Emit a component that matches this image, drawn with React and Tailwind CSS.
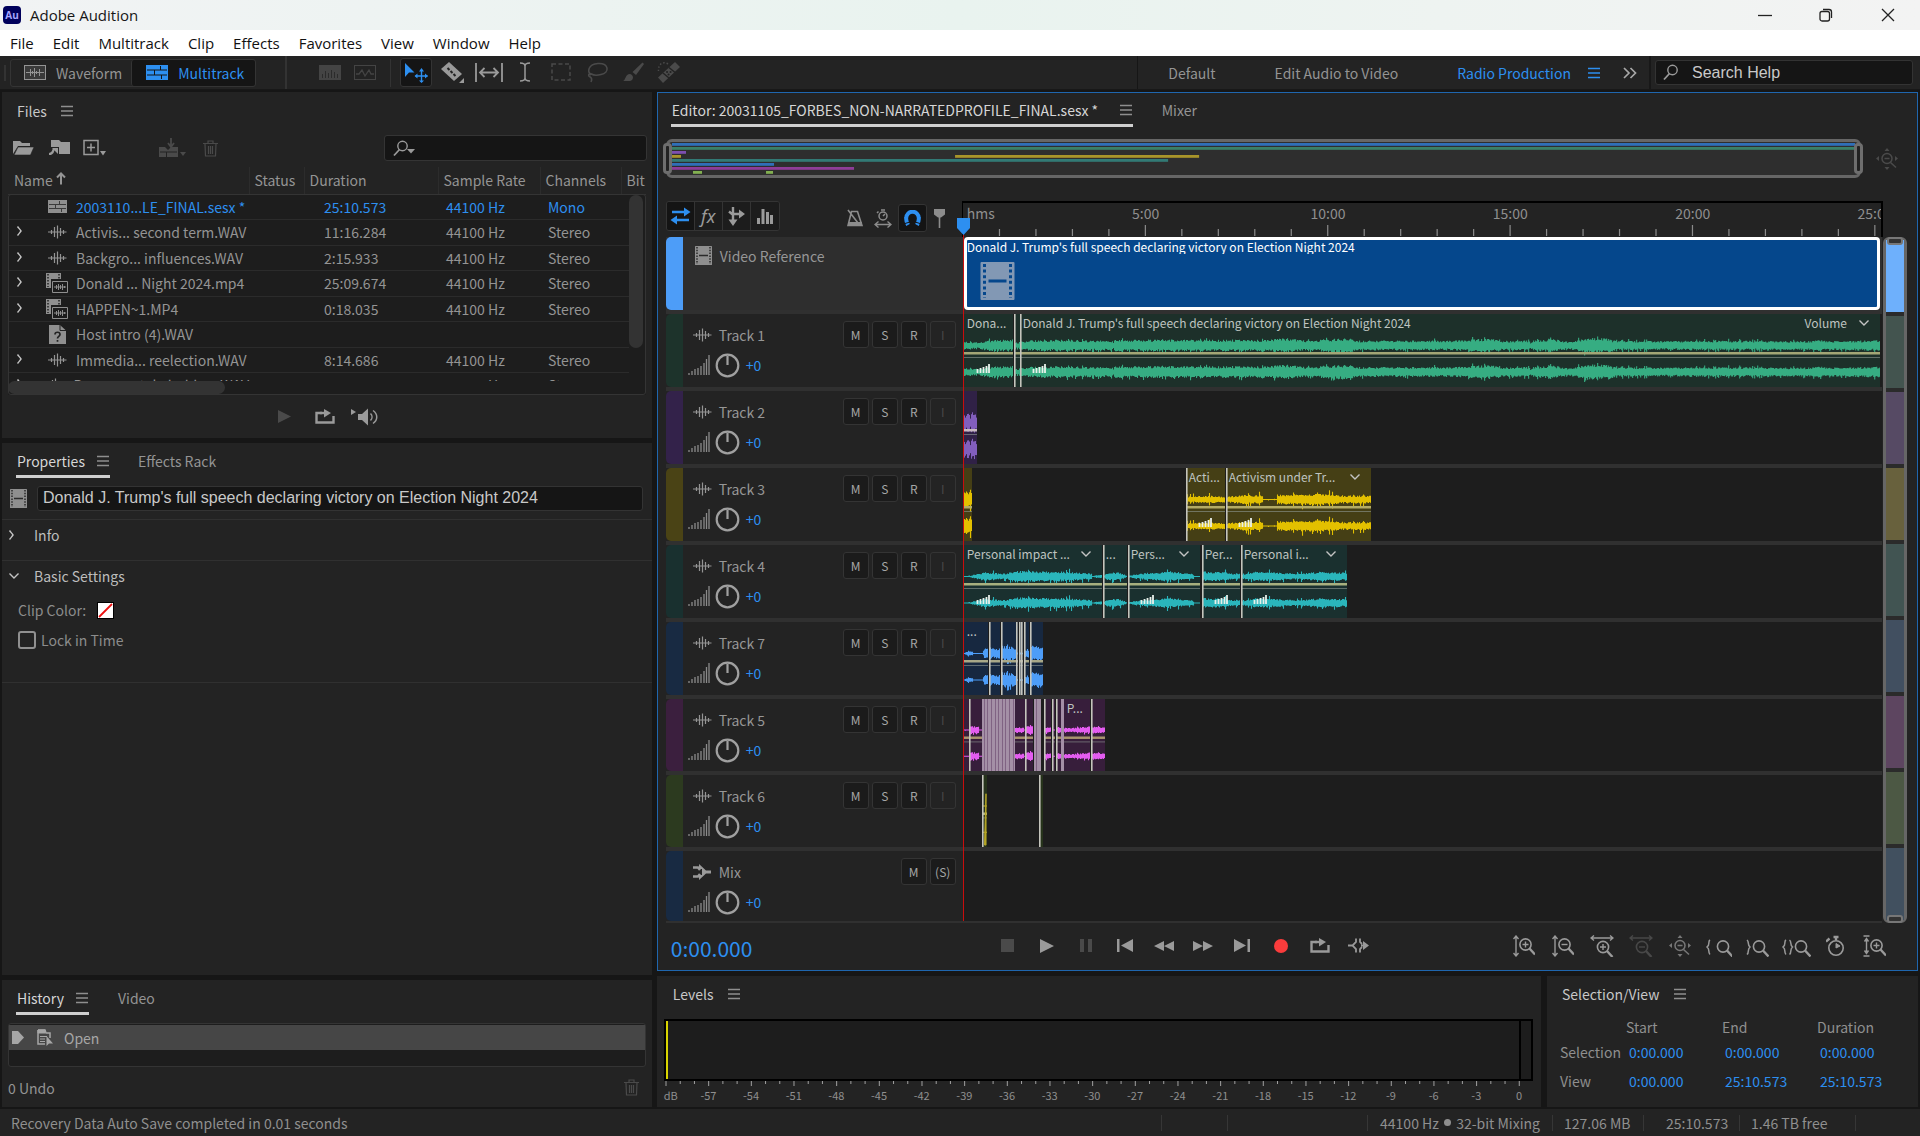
import React from "react";

const LANE = 918;
const TOTAL = 1510.573;
const pct = (v, of = LANE) => `${(v / of) * 100}%`;

function Svg({ w, h, children, className = "", label }) {
  return (
    <svg
      width={w}
      height={h}
      viewBox={`0 0 ${w} ${h}`}
      fill="none"
      stroke="currentColor"
      className={`shrink-0 ${className}`}
      aria-hidden={label ? undefined : true}
      aria-label={label}
    >
      {children}
    </svg>
  );
}

const Menu3 = ({ className = "text-[#8e8e8e]" }) => (
  <Svg w={12} h={12} className={className}>
    <path d="M0 1.5h12M0 6h12M0 10.5h12" strokeWidth="1.3" />
  </Svg>
);

const Chevron = ({ down, className = "text-[#c4c4c4]" }) =>
  down ? (
    <Svg w={12} h={8} className={className}>
      <path d="M1.5 1.5 6 6l4.5-4.5" strokeWidth="1.4" />
    </Svg>
  ) : (
    <Svg w={8} h={12} className={className}>
      <path d="M1.5 1.5C3 3.500 4 4.500 5 6 4 7.500 3 8.500 1.500 10.500" strokeWidth="1.400" />
    </Svg>
  );

const WaveIcon = ({ className = "text-[#949494]" }) => (
  <Svg w={19} h={14} className={className}>
    <path d="M0 7h18.500M3.500 5v4M6.500 2v10M9.500 0.500v13M12.500 3v8M15.500 5v4" strokeWidth="1.200" />
  </Svg>
);

const FilmIcon = ({ w = 17, h = 19, className = "text-[#8f8f8f]", hole = "#2b2b2b" }) => (
  <svg width={w} height={h} viewBox="0 0 34 38" className={`shrink-0 ${className}`} aria-hidden="true">
    <rect width="34" height="38" rx="1" fill="currentColor" />
    <path d="M4 2v34M30 2v34" stroke={hole} strokeWidth="3" strokeDasharray="3 2.600" />
    <path d="M8 19h18" stroke={hole} strokeWidth="3" />
  </svg>
);

const SessionIcon = ({ className = "text-[#8f8f8f]" }) => (
  <Svg w={19} h={13} className={className}>
    <path d="M0 0h19v13H0z" fill="currentColor" stroke="none" />
    <path d="M1 4.500h17M1 8.500h17M11.500 1v3M7.500 5v3.500M13.500 9v3" stroke="#3a3a3a" />
  </Svg>
);

const AvIcon = () => (
  <Svg w={22} h={20} className="text-[#8f8f8f]">
    <path d="M0 0h15v6H5v9H0z" fill="currentColor" stroke="none" />
    <path d="M2 1v13M13 1v5" stroke="#222" strokeWidth="1.500" strokeDasharray="1.500 1.500" />
    <path d="M6.500 8.500h15v11h-15zM8 14h12M10.500 12v4M12.500 11v6M14.500 12v4M16.500 11v6M18.500 13v2" />
  </Svg>
);

const MissingIcon = () => (
  <Svg w={17} h={19} className="text-[#8f8f8f]">
    <path d="M0 0h11l6 5.500V19H0z" fill="currentColor" stroke="none" />
    <path d="M11 0v5.500h6" stroke="#222" />
    <path d="M6 9.500c0-3 5-3 5 0 0 2-2.500 1.800-2.500 4M8.500 15v1.800" stroke="#222" strokeWidth="1.700" />
  </Svg>
);

const TrashIcon = () => (
  <Svg w={15} h={17} className="text-[#4a4a4a]">
    <path d="M0 3.500h15M5 3V1h5v2M2 4l.5 12h10L13 4M5.500 6v8M7.500 6v8M9.500 6v8" strokeWidth="1.200" />
  </Svg>
);

const LoopIcon = () => (
  <Svg w={20} h={15} className="text-[#9a9a9a]">
    <path d="M7 4H1.500v9.500h17V7" strokeWidth="2.400" />
    <path d="M5 4h6" strokeWidth="2.400" />
    <path d="M9 0l7 4-7 4.500z" fill="currentColor" stroke="none" />
  </Svg>
);

const SearchIcon = ({ w = 16, caret }) => (
  <Svg w={caret ? 22 : w} h={17} className="text-[#9a9a9a]">
    <circle cx="9.500" cy="6" r="4.700" strokeWidth="1.400" />
    <path d="M6.500 9.500 1 15.500" strokeWidth="1.800" />
    {caret && <path d="M14 9h8l-4 4.500z" fill="currentColor" stroke="none" />}
  </Svg>
);

function Tab({ children, active, menu, className = "" }) {
  return (
    <button
      type="button"
      role="tab"
      aria-selected={!!active}
      className={`flex h-[29px] items-center justify-between gap-[12px] border-b-[3px] px-px pb-[2px] whitespace-nowrap ${className} ${
        active ? "border-[#cfcfcf] text-[#d6d6d6]" : "border-transparent text-[#949494]"
      }`}
    >
      {children}
      {menu && <Menu3 />}
    </button>
  );
}

/* ---------- window chrome ---------- */

function TitleBar() {
  return (
    <header className="flex h-[30px] shrink-0 items-center bg-linear-to-r from-[#f1f3f4] via-[#e9f3ef] to-[#f3f3f3] pl-[3px] font-['Open_Sans',sans-serif] text-[15px] text-[#161616]">
      <span className="flex h-[18px] w-[18px] items-center justify-center rounded-[4px] bg-[#00005b] text-[10px] font-bold text-[#a5a5ff]">
        Au
      </span>
      <h1 className="ml-[9px]">Adobe Audition</h1>
      <div className="ml-auto flex items-center text-[#222]">
        <button type="button" aria-label="Minimize" className="flex h-[28px] w-[61px] items-center justify-center">
          <Svg w={14} h={14}><path d="M0 7.500h14" strokeWidth="1.300" /></Svg>
        </button>
        <button type="button" aria-label="Restore" className="flex h-[28px] w-[61px] items-center justify-center">
          <Svg w={14} h={14}><rect x="1" y="3.500" width="9.500" height="9.500" rx="2" strokeWidth="1.300" /><path d="M4 1.500h6a2.500 2.500 0 0 1 2.500 2.500v6" strokeWidth="1.300" /></Svg>
        </button>
        <button type="button" aria-label="Close" className="flex h-[28px] w-[64px] items-center justify-center">
          <Svg w={14} h={14}><path d="M1 1l12 12M13 1 1 13" strokeWidth="1.300" /></Svg>
        </button>
      </div>
    </header>
  );
}

function MenuBar() {
  return (
    <nav className="flex h-[26px] shrink-0 items-center gap-[19px] bg-white pl-[10px] font-['Open_Sans',sans-serif] text-[15px] leading-5 text-[#111]">
      {["File", "Edit", "Multitrack", "Clip", "Effects", "Favorites", "View", "Window", "Help"].map((m) => (
        <button type="button" key={m}>{m}</button>
      ))}
    </nav>
  );
}

const tools = [
  ["Razor", "text-[#9a9a9a]", 28, (
    <g key="g"><path d="M2 8 10 1l13 12-8 7z" fill="currentColor" stroke="none" /><path d="m8.500 7 2 2M11.500 10l2 2M14.500 13l2 2" stroke="#232323" strokeWidth="2" /><path d="M25 17v5h-5z" fill="currentColor" stroke="none" /></g>
  )],
  ["Slip", "text-[#9a9a9a]", 28, (
    <path key="g" d="M1 2v19M27 2v19M5 11.500h18M9.500 7 5 11.500 9.500 16M18.500 7l4.500 4.500-4.500 4.500" strokeWidth="1.800" />
  )],
  ["Time selection", "text-[#9a9a9a]", 12, (
    <path key="g" d="M1 2c3 0 5 .8 5 3v12c0 2.200-2 3-5 3M11 2c-3 0-5 .8-5 3v12c0 2.200 2 3 5 3" strokeWidth="1.500" />
  )],
  ["Marquee", "text-[#4a4a4a]", 20, (
    <rect key="g" x="1" y="3" width="18" height="16" strokeWidth="1.500" strokeDasharray="4 2.500" />
  )],
  ["Lasso", "text-[#4a4a4a]", 23, (
    <path key="g" d="M5 14C1 11 2 3 12 2.500c11-.5 12 9 3 11-4 1-8 .5-9.500-.500-2-1-4 1-2 2.500 2 1 3 2.500 1.500 5.500" strokeWidth="1.600" />
  )],
  ["Brush", "text-[#4a4a4a]", 22, (
    <g key="g"><path d="M20.500 1.500 22 3l-8 11-3.500-3z" fill="currentColor" stroke="none" /><path d="M1 20c3-1 2-7 7-7 4 1 4 6 0 7z" fill="currentColor" stroke="none" /></g>
  )],
  ["Spot healing", "text-[#4a4a4a]", 24, (
    <g key="g"><path d="M1 16.500 18 1l5 5L6 22z" fill="currentColor" stroke="none" /><path d="m6 12 6 5M12 6.500l6 5" stroke="#232323" strokeWidth="1.500" /><path d="M10 11h.1M13.500 11h.1M11.500 13.500h.1" stroke="#232323" strokeWidth="2" strokeLinecap="round" /><path d="M11 3C6 0 1 3 1.500 10" strokeWidth="1.500" strokeDasharray="1.500 2" /></g>
  )],
];

function ToolBar() {
  return (
    <div className="flex h-[34px] shrink-0 items-center border-b border-[#181818] bg-[#232323] text-[#949494]">
      <div className="ml-[4px] h-4 w-[2px] bg-[#333]" />
      <div className="ml-[4px] flex h-[28px] rounded-[3px] border border-[#343434]">
        <button type="button" className="flex items-center gap-[10px] pr-[9px] pl-[13px]">
          <Svg w={22} h={15} className="text-[#949494]">
            <rect x=".5" y=".5" width="21" height="14" fill="#3a3a3a" />
            <path d="M2 7.500h18M6.500 4v7M8.500 6v3M10.500 3v9M12.500 6v3M15.500 4v7" />
          </Svg>
          Waveform
        </button>
        <button type="button" className="flex items-center gap-[10px] rounded-[3px] border-l border-[#343434] bg-[#151515] pr-[11px] pl-[14px] text-[#2d8ff0]">
          <Svg w={22} h={15}>
            <path d="M0 0h22v15H0z" fill="currentColor" stroke="none" />
            <path d="M1 5h20M1 10h20M14.500 1v4M8.500 5v5M15.500 10v4" stroke="#151515" />
          </Svg>
          Multitrack
        </button>
      </div>
      <div className="ml-[29px] h-full w-[2px] bg-[#333]" />
      <Svg w={22} h={15} className="ml-[32px] text-[#444]">
        <rect width="22" height="15" fill="currentColor" stroke="none" />
        <path d="M3.500 13V9M6.500 13V6M9.500 13V8M12.500 13V5M15.500 13V7M18.500 13V9" stroke="#2b2b2b" />
      </Svg>
      <Svg w={22} h={15} className="ml-[13px] text-[#444]">
        <rect x=".5" y=".5" width="21" height="14" />
        <path d="M2 9h3l3-4 3 6 4-6 2 4h3" strokeWidth="1.300" />
      </Svg>
      <div className="ml-[14px] h-[28px] w-px bg-[#333]" />
      <button type="button" aria-label="Move" aria-pressed="true" className="ml-[9px] flex h-[29px] w-[32px] items-center justify-center rounded-[3px] border border-[#343434] bg-[#151515] text-[#2d8ff0]">
        <Svg w={24} h={20}>
          <path d="M1 0l9.500 9.500H5L1 14z" fill="currentColor" stroke="none" />
          <path d="M17.500 7v12M11.500 13h12" strokeWidth="1.400" />
          <path d="M15 8.500h5L17.500 5zM15 17.500h5L17.500 20zM13.500 10.500v5L10.500 13zM21 10.500v5l3-2.500z" fill="currentColor" stroke="none" />
        </Svg>
      </button>
      <div className="ml-[3px] flex items-center">
        {tools.map(([name, cls, w, d]) => (
          <button type="button" key={name} aria-label={name} className={`flex w-[36px] justify-center ${cls}`}>
            <Svg w={w} h={23}>{d}</Svg>
          </button>
        ))}
      </div>
      <div className="ml-auto flex h-full items-center">
        <div className="h-full w-px bg-[#161616]" />
        <button type="button" className="ml-[30px]">Default</button>
        <button type="button" className="ml-[59px]">Edit Audio to Video</button>
        <button type="button" className="ml-[59px] text-[#2d8ff0]">Radio Production</button>
        <button type="button" aria-label="Workspace menu" className="ml-[17px]"><Menu3 className="text-[#2d8ff0]" /></button>
        <button type="button" aria-label="More workspaces" className="ml-[23px]">
          <Svg w={14} h={12} className="text-[#a8a8a8]"><path d="m1 1 5 5-5 5M7.500 1l5 5-5 5" strokeWidth="1.700" /></Svg>
        </button>
        <div className="ml-[12px] h-full w-[2px] bg-[#181818]" />
        <label className="mr-[7px] ml-[4px] flex h-[25px] w-[258px] items-center gap-[13px] rounded-[3px] border border-[#333] bg-[#151515] pl-[7px]">
          <SearchIcon />
          <input aria-label="Search Help" placeholder="Search Help" className="w-full min-w-0 bg-transparent font-['Liberation_Sans',sans-serif] text-[16px] outline-none placeholder:text-[#c9c9c9]" />
        </label>
      </div>
    </div>
  );
}

/* ---------- left column ---------- */

const files = [
  ["session", "2003110...LE_FINAL.sesx *", "25:10.573", "44100 Hz", "Mono"],
  ["wave", "Activis... second term.WAV", "11:16.284", "44100 Hz", "Stereo"],
  ["wave", "Backgro... influences.WAV", "2:15.933", "44100 Hz", "Stereo"],
  ["av", "Donald ... Night 2024.mp4", "25:09.674", "44100 Hz", "Stereo"],
  ["av", "HAPPEN~1.MP4", "0:18.035", "44100 Hz", "Stereo"],
  ["missing", "Host intro (4).WAV", "", "", ""],
  ["wave", "Immedia... reelection.WAV", "8:14.686", "44100 Hz", "Stereo"],
  ["wave", "Person... stakeholders.WAV", "10:35.049", "44100 Hz", "Stereo"],
];

function FilesPanel() {
  return (
    <section className="bg-[#232323] pt-[8px]">
      <h2 className="flex h-[22px] items-center gap-[14px] pl-[15px] text-[#c8c8c8]">Files <Menu3 /></h2>
      <div className="mt-[13px] flex h-[26px] items-center pr-[5px] pl-[11px] text-[#9a9a9a]">
        <button type="button" aria-label="Open file">
          <Svg w={21} h={16}>
            <path d="M0 14V1h7l2 2h8v3H5z" fill="currentColor" stroke="none" />
            <path d="M5 7h16l-3.500 8H1z" fill="currentColor" stroke="#232323" strokeWidth=".6" />
          </Svg>
        </button>
        <button type="button" aria-label="Import file" className="ml-[14px]">
          <Svg w={23} h={18}>
            <path d="M3 1h8l2 2h9v12H11V8H3z" fill="currentColor" stroke="none" />
            <path d="M1 15c5 0 4-5 5-5" strokeWidth="2.200" /><path d="M4 9h6v6z" fill="currentColor" stroke="none" />
          </Svg>
        </button>
        <button type="button" aria-label="New file" className="ml-[12px]">
          <Svg w={23} h={18}>
            <path d="M1 1.500h14v14H1zM8 4.500v8M4 8.500h8" strokeWidth="1.500" />
            <path d="M17 12h6l-3 4.500z" fill="currentColor" stroke="none" />
          </Svg>
        </button>
        <button type="button" aria-label="Insert into multitrack" className="ml-[53px] text-[#4a4a4a]" disabled>
          <Svg w={27} h={20}>
            <path d="M0 9h6l3 3 3-3h7v10H0z" fill="currentColor" stroke="none" />
            <path d="M1 14h17M7.500 14v5" stroke="#232323" /><path d="M12 0v8M9 5l3 4 3-4" strokeWidth="1.800" />
            <path d="M21 14h6l-3 4z" fill="currentColor" stroke="none" />
          </Svg>
        </button>
        <button type="button" aria-label="Delete" disabled className="ml-[17px]"><TrashIcon /></button>
        <label className="ml-auto flex h-[26px] w-[263px] items-center rounded-[3px] border border-[#343434] bg-[#151515] pl-[8px]">
          <SearchIcon caret />
          <input aria-label="Filter files" className="w-full min-w-0 bg-transparent px-1 outline-none" />
        </label>
      </div>

      <div className="relative mr-[6px] ml-[6px] pt-[6px]">
        <div className="h-[214px] overflow-hidden">
          <table className="w-full table-fixed border-collapse text-left">
            <colgroup>
              <col className="w-[241px]" /><col className="w-[55px]" /><col className="w-[134px]" />
              <col className="w-[102px]" /><col className="w-[81px]" /><col />
            </colgroup>
            <thead>
              <tr className="h-[27px] border-b border-[#333] text-[#949494]">
                <th className="pl-[6px] font-normal">
                  <span className="flex items-center gap-[3px]">
                    Name
                    <Svg w={10} h={13} className="mb-[3px]"><path d="M5 12.500V2M1 5.500l4-4 4 4" strokeWidth="2" /></Svg>
                  </span>
                </th>
                {["Status", "Duration", "Sample Rate", "Channels", "Bit"].map((h) => (
                  <th key={h} className="overflow-hidden border-l border-[#2c2c2c] pl-[5px] font-normal whitespace-nowrap">{h}</th>
                ))}
              </tr>
            </thead>
            <tbody className="bg-[#1d1d1d]">
              {files.map(([kind, name, dur, rate, ch]) => (
                <tr key={name} className={`h-[25px] border-b border-[#2b2b2b] whitespace-nowrap even:h-[26px] ${kind === "session" ? "text-[#2d8ff0]" : "text-[#949494]"}`}>
                  <td className="pl-[8px]">
                    <div className="flex items-center">
                      <span className="flex w-[30px] items-center pb-[2px]">{!["session", "missing"].includes(kind) && <Chevron />}</span>
                      <span className="flex h-[22px] w-[30px] items-center">
                        <span className="flex w-[22px] justify-center">
                          {kind === "session" ? <SessionIcon /> : kind === "wave" ? <WaveIcon /> : kind === "av" ? <AvIcon /> : <MissingIcon />}
                        </span>
                      </span>
                      <span className="leading-5">{name}</span>
                    </div>
                  </td>
                  <td />
                  <td className="pl-[20px] leading-5">{dur}</td>
                  <td className="pl-[8px] leading-5">{rate}</td>
                  <td className="pl-[8px] leading-5">{ch}</td>
                  <td />
                </tr>
              ))}
            </tbody>
          </table>
        </div>
        <div className="h-[14px] bg-[#1d1d1d]">
          <div className="h-[13px] w-[34%] rounded-full bg-[#333]" />
        </div>
        <div className="absolute top-[34px] right-px bottom-[14px] w-[16px] bg-[#1d1d1d]">
          <div className="h-[153px] w-[14px] rounded-full bg-[#333]" />
        </div>
        <div className="pointer-events-none absolute inset-x-0 top-[33px] bottom-0 rounded-[3px] border border-[#343434]" />
      </div>
      <div className="flex h-[43px] items-center justify-center pl-[4px] text-[#9a9a9a]">
        <button type="button" aria-label="Play preview" className="mr-[24px] text-[#4a4a4a]">
          <Svg w={13} h={13}><path d="M0 0v13l13-6.500z" fill="currentColor" stroke="none" /></Svg>
        </button>
        <button type="button" aria-label="Loop preview" className="mr-[16px]"><LoopIcon /></button>
        <button type="button" aria-label="Auto-play">
          <Svg w={28} h={18}>
            <path d="M0 1v6l5-3z" fill="currentColor" stroke="none" />
            <path d="M7 6h4l6-5.500v17L11 12H7z" fill="currentColor" stroke="none" />
            <path d="M19.500 5.500c2 2 2 5 0 7M22 2.500c5 3.500 5 9.500 0 13" strokeWidth="1.500" />
          </Svg>
        </button>
      </div>
    </section>
  );
}

function PropertiesPanel() {
  return (
    <section className="flex-1 bg-[#232323] pt-[6px]">
      <div role="tablist" className="flex gap-[27px] pl-[14px]">
        <Tab active menu>Properties</Tab>
        <Tab>Effects Rack</Tab>
      </div>
      <div className="mt-[8px] flex items-center gap-[10px] pr-[9px] pl-[8px]">
        <FilmIcon />
        <input
          aria-label="Clip name"
          defaultValue="Donald J. Trump's full speech declaring victory on Election Night 2024"
          className="h-[25px] min-w-0 flex-1 rounded-[3px] border border-[#333] bg-[#151515] px-[5px] pb-[2px] font-['Liberation_Sans',sans-serif] text-[16px] text-[#c9c9c9] outline-none"
        />
      </div>
      <button type="button" aria-expanded="false" className="mt-[8px] flex h-[41px] w-full items-start gap-[18px] border-t border-[#303030] pt-[5px] pl-[6px] leading-5 text-[#bdbdbd]">
        <span className="flex h-5 items-center"><Chevron /></span>Info
      </button>
      <div className="border-y border-[#303030] pt-[5px] pb-[32px]">
        <button type="button" aria-expanded="true" className="flex items-center gap-[14px] pl-[6px] leading-5 text-[#bdbdbd]">
          <Chevron down />Basic Settings
        </button>
        <div className="mt-[14px] flex items-center gap-[11px] pl-[16px] leading-5 text-[#8c8c8c]">
          Clip Color:
          <button type="button" aria-label="Clip color: none" className="border border-black bg-white">
            <Svg w={15} h={15} className="text-[#e11]"><path d="M1 14 14 1" strokeWidth="1.800" /></Svg>
          </button>
        </div>
        <label className="mt-[10px] flex items-center gap-[5px] pl-[16px] leading-5 text-[#8c8c8c]">
          <input type="checkbox" className="h-[18px] w-[18px] appearance-none rounded-[3px] border-2 border-[#909090]" />
          Lock in Time
        </label>
      </div>
    </section>
  );
}

function HistoryPanel() {
  return (
    <section className="bg-[#232323] pt-[6px]">
      <div role="tablist" className="flex gap-[28px] pl-[14px]">
        <Tab active menu>History</Tab>
        <Tab>Video</Tab>
      </div>
      <div className="mx-[6px] mt-[8px] h-[44px] rounded-[3px] border border-[#343434] bg-[#1d1d1d] pt-px">
        <div className="flex h-[25px] items-center bg-[#464646] pl-[3px] text-[#a6a6a6]">
          <Svg w={12} h={13}><path d="M0 0h6l6 6.500L6 13H0z" fill="currentColor" stroke="none" /></Svg>
          <Svg w={17} h={18} className="mr-[10px] ml-[13px]">
            <path d="M1 1h7l1 3h4v5M1 1v14h7" strokeWidth="1.500" /><path d="M1 1h7v3H1z" fill="currentColor" />
            <path d="M3 7.500h7M3 10h5M3 12.500h5" /><path d="M9.500 7v10l2.500-2.500H16z" fill="currentColor" stroke="none" />
          </Svg>
          Open
        </div>
      </div>
      <div className="flex h-[40px] items-center justify-between pr-[13px] pl-[6px] pt-px text-[#949494]">
        0 Undo
        <button type="button" aria-label="Delete history" disabled><TrashIcon /></button>
      </div>
    </section>
  );
}

/* ---------- editor ---------- */

const overview = [
  ["#2f6fb8", 1, [[0, 1183]]],
  ["#3a8068", 5, [[0, 1183]]],
  ["#7d4fb0", 9, [[0, 14]]],
  ["#a8952a", 13, [[0, 9], [283, 527]]],
  ["#327a75", 17, [[0, 496]]],
  ["#2f6fb8", 21, [[0, 102]]],
  ["#8e3d98", 25, [[0, 182]]],
  ["#82b050", 29, [[21, 30], [94, 101]]],
];

function Overview() {
  return (
    <div className="mt-[12px] flex items-center">
      <div className="relative h-[39px] flex-1 rounded-[6px] border-[3px] border-[#666] bg-[#2e2e2e]">
        <svg viewBox="0 0 1183 33" preserveAspectRatio="none" className="block h-[33px] w-full px-[3px]" aria-label="Session overview">
          {overview.map(([c, y, spans]) => spans.map(([a, b]) => <rect key={`${y}-${a}`} x={a} y={y} width={b - a} height="2.800" fill={c} />))}
        </svg>
        <div className="absolute top-px -left-[6px] h-[31px] w-[9px] rounded-[4px] border-[3px] border-[#6e6e6e] bg-[#222]" />
        <div className="absolute top-px -right-[5px] h-[31px] w-[9px] rounded-[4px] border-[3px] border-[#6e6e6e] bg-[#222]" />
      </div>
      <button type="button" aria-label="Zoom out full" className="mr-[9px] ml-[15px] text-[#4a4a4a]" disabled>
        <ZoomNav />
      </button>
    </div>
  );
}

const ZoomNav = () => (
  <Svg w={22} h={22}>
    <circle cx="11" cy="10.500" r="5" strokeWidth="1.500" />
    <path d="M8.500 10.500h5M14.500 14.500l5.500 5" strokeWidth="1.600" />
    <path d="M8.500 3h5L11 0zM8.500 19h5L11 22zM3 8v5L0 10.500zM19 8v5l3-2.500z" fill="currentColor" stroke="none" />
  </Svg>
);

const ModeButton = ({ label, active, children }) => (
  <button type="button" aria-label={label} aria-pressed={!!active} className={`flex h-[28px] w-[28px] items-center justify-center border-r border-[#343434] last:border-r-0 ${active ? "bg-[#141414] text-[#2d8ff0]" : "bg-[#1c1c1c] text-[#9a9a9a]"}`}>
    {children}
  </button>
);

const majors = [[300, "5:00"], [600, "10:00"], [900, "15:00"], [1200, "20:00"], [1500, "25:00"]];

function RulerRow() {
  return (
    <div className="flex h-[36px]">
      <div className="flex w-[297px] shrink-0 items-start">
        <div className="flex overflow-hidden rounded-[3px] border border-[#343434]">
          <ModeButton label="Inputs/Outputs" active>
            <Svg w={21} h={18}><path d="M2 5h13M19 13H6" strokeWidth="2.400" /><path d="M14 .5 20.500 5 14 9.500zM7 8.500.5 13 7 17.500z" fill="currentColor" stroke="none" /></Svg>
          </ModeButton>
          <ModeButton label="Effects"><span className="font-['Noto_Sans',sans-serif] text-[18px] italic">fx</span></ModeButton>
          <ModeButton label="Sends">
            <Svg w={18} h={19}><path d="M6 0v14M2 4.500l3 2.500h8" strokeWidth="2.400" /><path d="M12 2.500 18 7l-6 4.500zM1.500 12.500h9L6 19z" fill="currentColor" stroke="none" /></Svg>
          </ModeButton>
          <ModeButton label="EQ">
            <Svg w={16} h={16}><path d="M0 16v-6h3v6zM4.500 16V1h3v15zM9 16V4h3v12zM13 16V7h3v9z" fill="currentColor" stroke="none" /></Svg>
          </ModeButton>
        </div>
        <div className="mt-[3px] ml-auto flex h-[28px] items-center text-[#8c8c8c]">
          <button type="button" aria-label="Metronome">
            <Svg w={16} h={18}><path d="M4.500 2.500h6L15 16.500H1zM1 1l10 13" strokeWidth="1.600" /><path d="M1 13h14v4H1z" fill="currentColor" stroke="none" /></Svg>
          </button>
          <button type="button" aria-label="Snap time" className="ml-[11px]">
            <Svg w={18} h={19}><circle cx="9" cy="7" r="4" strokeWidth="1.500" /><path d="M9 7l2-2M7 1h4M4.500 2.500 3 4" strokeWidth="1.500" /><path d="M2 15.500h14M4.500 12.500 1 15.500l3.500 3M13.500 12.500l3.500 3-3.500 3" strokeWidth="1.400" /></Svg>
          </button>
          <button type="button" aria-label="Snapping" aria-pressed="true" className="ml-[6px] flex h-[28px] w-[29px] items-center justify-center rounded-[3px] border border-[#343434] bg-[#141414] text-[#2d8ff0]">
            <Svg w={17} h={17}><path d="M4 15C2.500 12 2 10 2.200 8a6.200 6.200 0 0 1 12.600 0c.2 2-.3 4-1.800 7" strokeWidth="4" /><path d="M1 13.500l5-1.500M16 13.500l-5-1.500" stroke="#141414" /></Svg>
          </button>
          <button type="button" aria-label="Marker" className="mr-[18px] ml-[7px]">
            <Svg w={11} h={19}><path d="M0 0h11v5.500L7 8.500H4L0 5.500z" fill="currentColor" stroke="none" /><path d="M5.500 8v11" strokeWidth="1.600" /></Svg>
          </button>
        </div>
      </div>
      <div className="relative -ml-px min-w-0 flex-1 overflow-hidden border-t-2 border-r-2 border-l border-black pl-[4px] text-[#8f8f8f]">
        <span className="block leading-5">hms</span>
        <svg viewBox={`0 0 ${TOTAL} 12`} preserveAspectRatio="none" className="absolute bottom-0 left-0 block h-[12px] w-full" aria-hidden="true">
          {Array.from({ length: 25 }, (_, i) => i + 1).map((i) => (
            <rect key={i} x={i * 60 - 1} y={i % 5 ? 4 : 0} width="2" height={i % 5 ? 7 : 11} fill="#8a8a8a" />
          ))}
        </svg>
        {majors.map(([t, l]) => (
          <span key={l} className="absolute top-0 w-[60px] -translate-x-1/2 pl-px text-center leading-5" style={{ left: pct(t, TOTAL) }}>{l}</span>
        ))}
      </div>
      <div className="w-[24px] shrink-0" />
    </div>
  );
}

/* Vertical strokes, one for each pixel column, following a list of [x, amplitude] points. */
function wavePath(width, centre, env, seed, spike) {
  let s = seed;
  const rand = () => {
    s = (s * 1103515245 + 12345) % 2147483648;
    return s / 2147483648;
  };
  let d = "";
  for (let x = 0; x < width; x++) {
    let k = 0;
    while (k < env.length - 2 && env[k + 1][0] < x) k++;
    const [x0, a0] = env[k];
    const [x1, a1] = env[k + 1] || [width, a0];
    const amp = a0 + (a1 - a0) * Math.min(1, Math.max(0, (x - x0) / (x1 - x0 || 1)));
    const big = rand() < 0.07 ? spike : 1;
    const up = Math.max(0.5, amp * (0.6 + 0.4 * rand()) * big);
    const down = Math.max(0.5, amp * (0.6 + 0.4 * rand()) * (rand() < 0.06 ? spike : big));
    d += `M${x + 0.5} ${(centre - up).toFixed(1)}V${(centre + down).toFixed(1)}`;
  }
  return d;
}

const flat = (a) => [[0, a], [1, a]];
const loud = [[0, 4], [10, 5.500], [40, 6], [92, 5], [93, 3], [94, 6], [150, 6], [250, 6], [262, 8], [285, 5], [330, 8], [335, 5], [380, 5], [430, 5], [470, 7], [480, 5], [508, 5], [510, 3], [512, 5], [530, 7], [548, 4], [556, 5], [565, 8], [590, 7], [592, 5], [640, 4.500], [700, 5], [790, 4.500], [800, 6], [806, 4.500], [859, 5.500]];

const tracks = [
  {
    name: "Track 1", h: "h-[73px]", strip: "bg-[#1d332b]", bg: "bg-[#1d302a]", wave: "#36ad82", line: "#a3a676", spike: 1.4,
    clips: [
      { x: 0, w: 49, label: "Dona...", env: [[0, 4], [10, 3], [28, 5.500], [48, 6]], vol: true },
      { x: 50, w: 6, env: flat(3), edge: true },
      { x: 56, w: 860, label: "Donald J. Trump's full speech declaring victory on Election Night 2024", env: loud, edge: true, vol: true, volume: true },
    ],
  },
  {
    name: "Track 2", h: "h-[73px]", strip: "bg-[#33224a]", bg: "bg-[#302146]", wave: "#a678f0", line: "#c8b8c0", spike: 1.1,
    clips: [{ x: 0, w: 13, env: [[0, 11], [1, 7], [2, 7], [3, 11], [6, 6], [7, 11], [12, 8]], sparse: true }],
  },
  {
    name: "Track 3", h: "h-[73px]", strip: "bg-[#4a4315]", bg: "bg-[#453f15]", wave: "#e3c000", line: "#b3ab66", spike: 1.9,
    clips: [
      { x: 0, w: 8, env: flat(8) },
      { x: 222, w: 39, label: "Acti...", env: [[0, 3], [20, 4], [38, 3]], edge: true, vol: true },
      { x: 262, w: 145, label: "Activism under Tr...", env: [[0, 3], [20, 5], [36, 4], [37, 0.5], [50, 0.5], [51, 5], [90, 6], [120, 4], [144, 4]], edge: true, vol: true, more: true },
    ],
  },
  {
    name: "Track 4", h: "h-[73px]", strip: "bg-[#19302f]", bg: "bg-[#1a302f]", wave: "#2ab5bb", line: "#a8b07f", spike: 1.7,
    clips: [
      { x: 0, w: 138, label: "Personal impact ...", env: [[0, 0.5], [6, 1], [18, 4], [42, 3], [50, 6], [85, 5], [105, 5], [126, 3], [128, 0.5], [138, 2]], vol: true, more: true },
      { x: 139, w: 24, label: "...", env: [[0, 0.5], [4, 4], [16, 4], [23, 1]], edge: true },
      { x: 164, w: 72, label: "Pers...", env: [[0, 1], [12, 3], [40, 5], [64, 3], [66, 0.5], [72, 0.5]], edge: true, vol: true, more: true },
      { x: 238, w: 38, label: "Per...", env: [[0, 5], [20, 5], [30, 3], [37, 3]], edge: true, vol: true },
      { x: 277, w: 106, label: "Personal i...", env: [[0, 2], [15, 5], [55, 3], [80, 5], [104, 4]], edge: true, vol: true, more: true },
    ],
  },
  {
    name: "Track 7", h: "h-[73px]", strip: "bg-[#182a42]", bg: "bg-[#172840]", wave: "#4d9df8", line: "#a8a888", spike: 1.4,
    clips: [
      { x: 0, w: 24, label: "...", env: [[0, 0.5], [4, 3], [8, 2], [9, 0.5], [18, 0.5], [20, 5]] },
      { x: 25, w: 11, env: flat(5), edge: true },
      { x: 37, w: 15, env: [[0, 5], [4, 8], [14, 6]], edge: true },
      { x: 52, w: 2, env: flat(1), edge: true },
      { x: 55, w: 2, env: flat(1), edge: true },
      { x: 57, w: 2, env: flat(1), edge: true },
      { x: 60, w: 5, env: flat(4), edge: true },
      { x: 66, w: 13, env: [[0, 6], [2, 8], [12, 8]], edge: true },
    ],
  },
  {
    name: "Track 5", h: "h-[72px]", strip: "bg-[#3b1f3e]", bg: "bg-[#371e3b]", wave: "#e45cf0", line: "#a8956e", spike: 1.4,
    clips: [
      { x: 0, w: 5, env: flat(0.5) },
      { x: 5, w: 13, env: [[0, 4], [9, 4], [10, 0.5]], edge: true },
      { x: 18, w: 33, stripes: true },
      { x: 51, w: 10, env: [[0, 3], [8, 3], [9, 0.5]] },
      { x: 61, w: 8, env: flat(4), edge: true },
      { x: 70, w: 7, stripes: true },
      { x: 80, w: 7, env: flat(3), edge: true },
      { x: 88, w: 3, env: flat(0.5), edge: true },
      { x: 92, w: 5, env: flat(3), edge: true },
      { x: 97, w: 3, stripes: true },
      { x: 100, w: 26, label: "P...", env: [[0, 2], [12, 2.500], [26, 4]] },
      { x: 127, w: 14, env: [[0, 4], [13, 3]], edge: true },
    ],
  },
  {
    name: "Track 6", h: "h-[72px]", strip: "bg-[#2c3a1f]", bg: "bg-[#26331b]", wave: "#c2b32c", line: "#b8b880", spike: 1,
    clips: [
      { x: 18, w: 5, env: flat(0.5), edge: true, ramp: true },
      { x: 75, w: 4, env: flat(0.5), edge: true, quiet: true },
    ],
  },
];

function Clip({ track, clip, seed }) {
  const w = clip.w;
  if (clip.stripes) {
    return (
      <div className="absolute inset-y-0 bg-[#a48fa6]" style={{ left: pct(clip.x), width: pct(w) }}>
        <svg viewBox={`0 0 ${w} 73`} preserveAspectRatio="none" className="h-full w-full" aria-hidden="true">
          <path d={Array.from({ length: Math.floor(w / 3.6) }, (_, i) => `M${Math.round(3.600 * (i + 0.8)) - 0.5} 0V73`).join("")} stroke="#6f4f74" strokeWidth="0.7" />
        </svg>
      </div>
    );
  }
  return (
    <article className={`absolute inset-y-0 overflow-hidden ${track.bg}`} style={{ left: pct(clip.x), width: pct(w) }}>
      <svg viewBox={`0 0 ${w} 73`} preserveAspectRatio="none" className="absolute inset-0 h-full w-full" aria-hidden="true">
        {!clip.quiet && (
          <g>
            <path d={wavePath(w, 31.500, clip.env, seed, track.spike)} stroke={track.wave} strokeWidth={clip.sparse ? 0.7 : 1.1} />
            <path d={wavePath(w, 58, clip.env, seed, track.spike)} stroke={track.wave} strokeWidth={clip.sparse ? 0.7 : 1.1} />
            <rect x="0" y="38" width={w} height="2.500" fill={track.line} />
            <rect x="0" y="43" width={w} height="1" fill="#8f9a94" opacity=".6" />
          </g>
        )}
        {clip.ramp && <path d="M2.500 71 4 19V71z" fill="#b5a425" stroke="#b5a425" />}
        {clip.edge && <rect x="0" y="0" width="1.600" height="73" fill="#c4c4bc" />}
        {clip.vol && <path d="M13.500 59v-4M16.500 59v-5M19.500 59v-6M22.500 59v-7M25 59v-9" stroke="#e8f0ea" strokeWidth="1.800" />}
      </svg>
      {clip.label && (
        <div className="relative flex items-center pl-[3px] text-[12px] leading-[18px] whitespace-nowrap text-[#bfc4c0]">
          {clip.label}
          {clip.volume && <span className="mr-[11px] ml-auto">Volume</span>}
          {(clip.more || clip.volume) && (
            <button type="button" aria-label="Clip options" className={clip.volume ? "mr-[10px]" : "mr-[10px] ml-auto"}><Chevron down /></button>
          )}
        </div>
      )}
    </article>
  );
}

function TrackButton({ children, dim, label }) {
  return (
    <button type="button" aria-label={label} className={`flex h-[27px] w-[26px] items-center justify-center rounded-[3px] border border-[#343434] text-[12px] ${dim ? "text-[#484848]" : "bg-[#1b1b1b] text-[#a6a6a6]"}`}>
      {children}
    </button>
  );
}

function TrackHeader({ track, mix }) {
  return (
    <div className="flex w-[297px] shrink-0 bg-[#232323]">
      <div className={`w-[17px] rounded-l-[5px] ${track.strip}`} />
      <div className="flex-1 pt-[7px] pr-[7px]">
        <div className="flex h-[27px] items-center pl-[10px]">
          {mix ? (
            <Svg w={19} h={16} className="text-[#9a9a9a]"><path d="M0 3.500h5l2 2.500M0 12.500h5l2-2.500" strokeWidth="2.500" /><path d="M6 0l7 6.500h5v3h-5L6 16V11h3V5H6z" fill="currentColor" stroke="none" /></Svg>
          ) : (
            <WaveIcon />
          )}
          <span className="ml-[7px] text-[#969696]">{track.name}</span>
          <div className="ml-auto flex gap-[3px]">
            <TrackButton label="Mute">M</TrackButton>
            {mix ? (
              <TrackButton label="Solo">(S)</TrackButton>
            ) : (
              <>
                <TrackButton label="Solo">S</TrackButton>
                <TrackButton label="Record">R</TrackButton>
                <TrackButton label="Input" dim>I</TrackButton>
              </>
            )}
          </div>
        </div>
        <div className="mt-[4px] flex h-[26px] items-center pl-[5px]">
          <Svg w={22} h={20} className="text-[#8a8a8a]">
            <path d="M1 20v-2M4 20v-4M7 20v-6M10 20v-7M13 20v-9M16 20v-12M18.500 20V4M21 20V0" strokeWidth="1.300" />
          </Svg>
          <Svg w={25} h={25} className="ml-[5px] text-[#a0a0a0]" label="Volume knob">
            <circle cx="12.500" cy="12.500" r="10.800" strokeWidth="2.200" />
            <path d="M12.500 3v9" strokeWidth="2.200" />
          </Svg>
          <span className="ml-[6px] text-[#2d8ff0]">+0</span>
        </div>
      </div>
    </div>
  );
}

const segments = ["bg-[#6eb0fc]", "bg-[#43544f]", "bg-[#564a64]", "bg-[#68613d]", "bg-[#415452]", "bg-[#414f60]", "bg-[#5d4560]", "bg-[#4c5844]", "bg-[#41505f]"];

function Tracks() {
  return (
    <div className="relative flex">
      <div className="min-w-0 flex-1 border-b-2 border-[#303030]">
        <div className="flex flex-col gap-[4px] bg-[#303030]">
          <div className="flex h-[73px]">
            <div className="flex w-[297px] shrink-0 bg-[#2e2e2e]">
              <div className="w-[17px] rounded-l-[5px] bg-[#4d9df8]" />
              <div className="flex h-[37px] items-center gap-[8px] pl-[12px] text-[#969696]"><FilmIcon />Video Reference</div>
            </div>
            <div className="mr-[2px] ml-px min-w-0 flex-1 rounded-[4px] border-[3px] border-white bg-[#05478c]">
              <p className="truncate text-[12px] leading-[14px] text-white">Donald J. Trump's full speech declaring victory on Election Night 2024</p>
              <div className="mt-[8px] ml-[13px]"><FilmIcon w={35} h={38} className="text-[#8298b4]" hole="#05478c" /></div>
            </div>
          </div>
          {tracks.map((t, ti) => (
            <div key={t.name} className={`flex ${t.h}`}>
              <TrackHeader track={t} />
              <div className="relative ml-px min-w-0 flex-1 bg-[#1d1d1d]">
                {t.clips.map((c, i) => <Clip key={i} track={t} clip={c} seed={ti * 977 + i * 131 + 17} />)}
              </div>
            </div>
          ))}
          <div className="flex h-[70px]">
            <TrackHeader mix track={{ name: "Mix", strip: "bg-[#182a42]" }} />
            <div className="ml-px flex-1 bg-[#1d1d1d]" />
          </div>
        </div>
      </div>
      <div className="relative ml-px flex w-[24px] shrink-0 flex-col gap-[4px] rounded-[6px] border-[3px] border-[#666] bg-[#2b2b2b]">
        {segments.map((c, i) => <div key={i} className={`flex-1 ${c}`} />)}
        <div className="absolute -top-[3px] left-[1px] h-[8px] w-[16px] rounded-[3px] border-2 border-[#777] bg-[#333]" />
        <div className="absolute -bottom-[3px] left-[1px] h-[8px] w-[16px] rounded-[3px] border-2 border-[#777] bg-[#333]" />
      </div>
      <div className="absolute -top-[19px] bottom-[2px] left-[290px] flex w-[15px] flex-col items-center">
        <Svg w={15} h={17} className="text-[#2d8ff0]"><path d="M1 0h13v10l-6.500 7L1 10z" fill="currentColor" stroke="none" /></Svg>
        <div className="w-px flex-1 bg-[#c80d0d]" />
      </div>
    </div>
  );
}

const transport = [
  ["Stop", "text-[#4a4a4a]", 13, 13, "M0 0h13v13H0z"],
  ["Play", "text-[#9a9a9a]", 14, 14, "M0 0v14l14-7z"],
  ["Pause", "text-[#4a4a4a]", 12, 13, "M0 0h4v13H0zM8 0h4v13H8z"],
  ["Go to start", "text-[#9a9a9a]", 16, 13, "M0 0h2.500v13H0zM16 0v13L4 6.500z"],
  ["Rewind", "text-[#9a9a9a]", 20, 10, "M10 0v10L0 5zM20 0v10L10 5z"],
  ["Fast forward", "text-[#9a9a9a]", 20, 10, "M0 0v10l10-5zM10 0v10l10-5z"],
  ["Go to end", "text-[#9a9a9a]", 16, 13, "M13.500 0H16v13h-2.500zM0 0v13l12-6.500z"],
];

const lens = (cx, cy, sign) => (
  <g>
    <circle cx={cx} cy={cy} r="5.600" strokeWidth="1.600" />
    <path d={`M${cx + 4} ${cy + 4}l5.500 6`} strokeWidth="2.400" />
    {sign && <path d={`M${cx - 3} ${cy}h6${sign === "+" ? `M${cx} ${cy - 3}v6` : ""}`} strokeWidth="1.400" />}
  </g>
);
const vArrow = <path d="M3 1.500v19M.5 4 3 1l2.500 3M.5 18 3 21l2.500-3" strokeWidth="1.400" />;
const hArrow = <path d="M1.500 3h21M4 .5 1 3l3 2.500M20 .5 23 3l-3 2.500" strokeWidth="1.400" />;

const zooms = [
  ["Zoom in amplitude", 22, <g key="i">{vArrow}{lens(12.500, 9.500, "+")}</g>],
  ["Zoom out amplitude", 22, <g key="i">{vArrow}{lens(12.500, 9.500, "-")}</g>],
  ["Zoom in time", 24, <g key="i">{hArrow}{lens(13, 12, "+")}</g>],
  ["Zoom out time", 24, <g key="i">{hArrow}{lens(13, 12, "-")}</g>, true],
  ["Zoom out full", 22, null],
  ["Zoom in at in point", 26, <g key="i"><path d="M4 5C1.500 6.500 4.500 9.500 1 12c3.500 2.500.5 5.500 3 7.500" strokeWidth="1.500" />{lens(17, 11.500, "")}</g>],
  ["Zoom in at out point", 23, <g key="i"><path d="M1 5c2.500 2 0 4.500 3 7-3 2.500-.5 5.500-3 7.500" strokeWidth="1.500" />{lens(13, 11.500, "")}</g>],
  ["Zoom to selection", 29, <g key="i"><path d="M4 5C1.500 6.500 4.500 9.500 1 12c3.500 2.500.5 5.500 3 7.500M7.500 5c2.500 2 0 4.500 3 7-3 2.500-.5 5.500-3 7.500" strokeWidth="1.500" />{lens(19, 11.500, "")}</g>],
  ["Zoom to time", 19, <g key="i"><circle cx="10" cy="13" r="7.200" strokeWidth="1.600" /><path d="M10 13V8.500l4 2.500z" fill="currentColor" /><path d="M7.500 2h5M10 2v3M0 6.500 3.500 3.500" strokeWidth="2.400" /></g>],
  ["Reset zoom", 23, <g key="i"><path d="M.5 1h6M.5 21h6M3.500 4v14M1.500 6.500 3.500 3.500l2 3M1.500 15.500l2 3 2-3" strokeWidth="1.400" />{lens(13.500, 10.500, "+")}</g>],
];

function Editor() {
  return (
    <section className="border border-[#1f66ae] bg-[#232323]">
      <div role="tablist" className="flex items-end gap-[28px] pt-[5px] pl-[13px]">
        <Tab active menu className="min-w-[462px]">Editor: 20031105_FORBES_NON-NARRATEDPROFILE_FINAL.sesx *</Tab>
        <Tab>Mixer</Tab>
      </div>
      <div className="pr-[10px] pl-[8px]">
        <Overview />
        <div className="mt-[23px]"><RulerRow /></div>
        <Tracks />
        <div className="mb-[2px] flex h-[45px] items-center">
          <output className="w-[323px] pt-[4px] pl-[5px] text-[21px] leading-6 text-[#2d8ff0]">0:00.000</output>
          <div className="flex items-center gap-px">
            {transport.map(([name, cls, w, h, d]) => (
              <button type="button" key={name} aria-label={name} className={`flex w-[38px] justify-center ${cls}`}>
                <Svg w={w} h={h}><path d={d} fill="currentColor" stroke="none" /></Svg>
              </button>
            ))}
            <button type="button" aria-label="Record" className="flex w-[38px] justify-center"><span className="h-[14px] w-[14px] rounded-full bg-[#fa3c3c]" /></button>
            <button type="button" aria-label="Loop playback" className="flex w-[38px] justify-center"><LoopIcon /></button>
            <button type="button" aria-label="Skip selection" className="flex w-[38px] justify-center text-[#9a9a9a]">
              <Svg w={21} h={15}><path d="M8 .5v3.500L4.500 7.500 8 11v3.500M12 .5v3.500l2 2M12 14.500V11l2-2M0 7.500h5M13 7.500h4" strokeWidth="1.800" /><path d="M15 3l6 4.500-6 4.500z" fill="currentColor" stroke="none" /></Svg>
            </button>
          </div>
          <div className="mr-[13px] ml-auto flex items-center text-[#9a9a9a]">
            {zooms.map(([name, w, icon, dim]) => (
              <button type="button" key={name} aria-label={name} className={`flex w-[39px] justify-center ${dim ? "text-[#484848]" : ""}`}>
                {icon ? <Svg w={w} h={22}>{icon}</Svg> : <span className="text-[#777]"><ZoomNav /></span>}
              </button>
            ))}
          </div>
        </div>
      </div>
    </section>
  );
}

/* ---------- bottom panels ---------- */

const dbLabels = Array.from({ length: 20 }, (_, i) => -57 + i * 3);

function Levels() {
  return (
    <section className="min-w-0 flex-1 bg-[#232323] pt-[8px]">
      <h2 className="flex h-5 items-center gap-[14px] pl-[16px] text-[#c8c8c8]">Levels <Menu3 /></h2>
      <div className="relative mt-[15px] mr-[8px] ml-[7px] h-[62px] border-2 border-black bg-[#1d1d1d]">
        <div className="h-full w-[2px] bg-[#d8d400]" />
        <div className="absolute inset-y-0 right-[10px] w-[2px] bg-black" />
      </div>
      <div className="relative mr-[22px] ml-[9px] h-[24px] text-[11px] text-[#8f8f8f]">
        <svg viewBox="0 0 853 6" preserveAspectRatio="none" className="block h-[6px] w-full overflow-visible" aria-hidden="true">
          {Array.from({ length: 61 }, (_, i) => <rect key={i} x={(i * 853) / 60 - 0.5} y="0" width="1" height={i % 3 ? 3 : 5} fill="#a0a0a0" />)}
        </svg>
        <span className="absolute top-[6px] -left-[2px] leading-4">dB</span>
        {dbLabels.map((v, i) => (
          <span key={v} className="absolute top-[6px] w-[30px] -translate-x-1/2 text-center leading-4" style={{ left: pct(i + 1, 20) }}>{v}</span>
        ))}
      </div>
    </section>
  );
}

function SelectionView() {
  return (
    <section className="w-[371px] shrink-0 bg-[#232323] pt-[8px]">
      <h2 className="flex h-5 items-center gap-[15px] pl-[15px] text-[#c8c8c8]">Selection/View <Menu3 /></h2>
      <table className="mt-[13px] ml-[13px] table-fixed border-collapse text-left leading-5 text-[#8f8f8f]">
        <colgroup><col className="w-[66px]" /><col className="w-[96px]" /><col className="w-[95px]" /><col className="w-[100px]" /></colgroup>
        <thead>
          <tr>
            <td />
            <th className="font-normal">Start</th><th className="font-normal">End</th><th className="font-normal">Duration</th>
          </tr>
        </thead>
        <tbody>
          {[["Selection", "0:00.000", "0:00.000", "0:00.000"], ["View", "0:00.000", "25:10.573", "25:10.573"]].map(([n, ...v]) => (
            <tr key={n} className="h-[29px]">
              <th className="font-normal">{n}</th>
              {v.map((x, i) => <td key={i} className="pl-[3px] text-[#2d8ff0]">{x}</td>)}
            </tr>
          ))}
        </tbody>
      </table>
    </section>
  );
}

function StatusBar() {
  return (
    <footer className="flex h-[27px] shrink-0 items-center bg-[#232323] pl-[11px] text-[#8f8f8f]">
      <span>Recovery Data Auto Save completed in 0.01 seconds</span>
      <div className="ml-auto flex h-[16px] items-center">
        <div className="flex h-full w-[66px] border-l border-[#363636]" />
        <div className="flex h-full w-[140px] border-l border-[#363636]" />
        <span className="flex h-full w-[185px] items-center justify-center border-l border-[#363636] whitespace-nowrap">44100 Hz&nbsp;<b className="mx-[2px] h-[7px] w-[7px] rounded-full bg-[#8f8f8f]" />&nbsp;32-bit Mixing</span>
        <span className="flex h-full w-[91px] items-center border-l border-[#363636] pl-[11px] whitespace-nowrap">127.06 MB</span>
        <span className="flex h-full w-[96px] items-center border-l border-[#363636] pl-[22px]">25:10.573</span>
        <span className="flex h-full w-[116px] items-center border-l border-[#363636] pl-[11px] whitespace-nowrap">1.46 TB free</span>
        <div className="h-full w-[65px] border-l border-[#363636]" />
      </div>
    </footer>
  );
}

export default function App() {
  return (
    <div className="flex min-h-screen flex-col bg-[#161616] font-['Noto_Sans_CJK_SC','Noto_Sans',sans-serif] text-[14px] leading-5">
      <TitleBar />
      <MenuBar />
      <ToolBar />
      <main className="grid flex-1 grid-cols-[34fr_66fr] gap-[5px] pt-[2px] pr-[2px] pb-[2px] pl-[2px]">
        <div className="flex min-w-0 flex-col gap-[5px]">
          <FilesPanel />
          <PropertiesPanel />
          <HistoryPanel />
        </div>
        <div className="flex min-w-0 flex-col gap-[5px]">
          <Editor />
          <div className="flex flex-1 gap-[6px]">
            <Levels />
            <SelectionView />
          </div>
        </div>
      </main>
      <StatusBar />
    </div>
  );
}
